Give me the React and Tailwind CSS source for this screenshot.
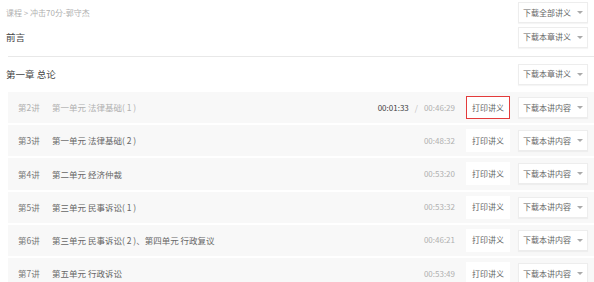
import React from 'react';

const font = { fontFamily: '"Noto Sans CJK SC", "Noto Sans", sans-serif' };

const lectures = [
  { no: '第2讲', title: '第一单元 法律基础( 1 )', time: '00:46:29', played: '00:01:33', active: true },
  { no: '第3讲', title: '第一单元 法律基础( 2 )', time: '00:48:32' },
  { no: '第4讲', title: '第二单元 经济仲裁', time: '00:53:20' },
  { no: '第5讲', title: '第三单元 民事诉讼( 1 )', time: '00:53:32' },
  { no: '第6讲', title: '第三单元 民事诉讼( 2 )、第四单元 行政复议', time: '00:46:21' },
  { no: '第7讲', title: '第五单元 行政诉讼', time: '00:53:49' },
];

const Caret = () => (
  <span className="ml-[6px] inline-block w-0 h-0 border-l-[3px] border-r-[3px] border-t-[3px] border-l-transparent border-r-transparent border-t-[#aaa]" />
);

const DropBtn = ({ label }) => (
  <div className="w-[70px] h-[21px] flex items-center justify-center bg-white border border-[#ededed] shadow-[0_1px_1px_rgba(0,0,0,0.04)] text-[8px] text-[#666]">
    <span>{label}</span>
    <Caret />
  </div>
);

export default function App() {
  return (
    <div className="w-[594px] h-[282px] overflow-hidden bg-white text-[#333]" style={font}>
      {/* breadcrumb */}
      <div className="h-[25px] flex items-center justify-between pl-[6px] pr-[6px]">
        <div className="text-[8px] text-[#b0b0b0]">课程 &gt; 冲击70分-郭守杰</div>
        <DropBtn label="下载全部讲义" />
      </div>

      {/* preface */}
      <div className="h-[24px] flex items-center justify-between pl-[6px] pr-[6px]">
        <div className="text-[9.5px] text-[#444]">前言</div>
        <DropBtn label="下载本章讲义" />
      </div>
      <div className="ml-[8px] mt-[7px] h-px bg-[#e8e8e8]" />

      {/* chapter */}
      <div className="h-[34px] flex items-center justify-between pl-[6px] pr-[6px]">
        <div className="text-[9.5px] text-[#444]">第一章 总论</div>
        <DropBtn label="下载本章讲义" />
      </div>

      <div className="ml-[8px] mt-[1px] flex flex-col gap-[2px]">
        {lectures.map((l) => (
          <div key={l.no} className="h-[31.2px] flex items-center bg-[#f8f8f8] pl-[10px] pr-[6px]">
            <div className={`w-[34px] text-[8.5px] ${l.active ? 'text-[#b0b0b0]' : 'text-[#777]'}`}>{l.no}</div>
            <div className={`flex-1 text-[8.5px] ${l.active ? 'text-[#b0b0b0]' : 'text-[#666]'}`}>{l.title}</div>
            <div className="flex items-center text-[8px] mr-[11px]">
              {l.played && (
                <>
                  <span className="text-[#444]">{l.played}</span>
                  <span className="text-[#bbb] mx-[6px]">/</span>
                </>
              )}
              <span className="text-[#b0b0b0]">{l.time}</span>
            </div>
            <div className={`w-[44px] h-[23px] flex items-center justify-center bg-white text-[8px] text-[#666] mr-[8px] ${l.active ? 'border-[1.5px] border-[#e33b3b]' : ''}`}>
              打印讲义
            </div>
            <DropBtn label="下载本讲内容" />
          </div>
        ))}
      </div>
    </div>
  );
}
